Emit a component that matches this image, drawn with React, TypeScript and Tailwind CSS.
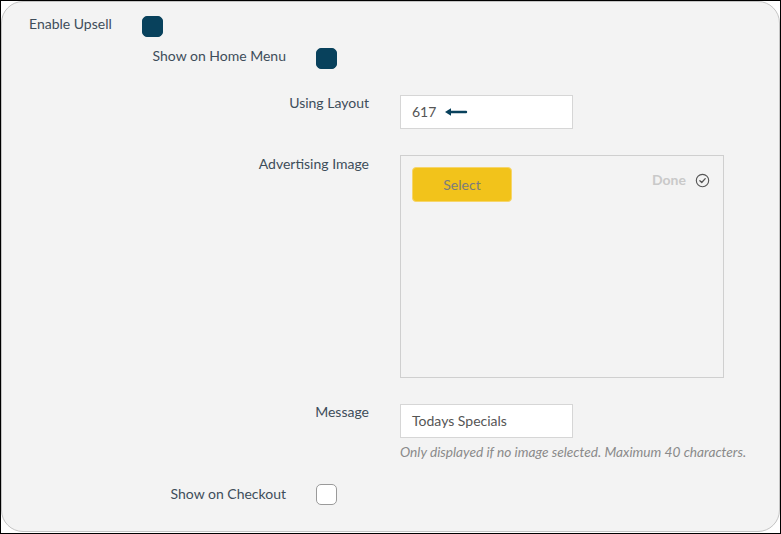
import React from 'react';

const font = { fontFamily: 'Lato, "Noto Sans", sans-serif' };

function Check({ on }: { on: boolean }) {
  return (
    <div
      className={`w-[21px] h-[21px] rounded-[5px] shrink-0 ${
        on ? 'bg-[#08415c] border border-[#08415c]' : 'bg-white border border-[#9a9a9a]'
      }`}
    />
  );
}

function ArrowLeft() {
  return (
    <svg width="24" height="10" viewBox="0 0 24 10" className="ml-[8px]">
      <path d="M22 5H5" stroke="#08415c" strokeWidth="2.4" strokeLinecap="round" />
      <path d="M1 5L7 1.2V8.8Z" fill="#08415c" />
    </svg>
  );
}

function DoneIcon() {
  return (
    <svg width="15" height="15" viewBox="0 0 16 16" className="ml-[9px]">
      <circle cx="8" cy="8" r="6.6" fill="none" stroke="#555" strokeWidth="1.2" />
      <path d="M5.2 8.2L7.2 10.1L10.9 6" fill="none" stroke="#555" strokeWidth="1.4" strokeLinecap="round" strokeLinejoin="round" />
    </svg>
  );
}

export default function App() {
  return (
    <div className="w-[781px] h-[534px] bg-white border border-black overflow-hidden" style={font}>
      <div className="h-[531px] rounded-[22px] border border-[#c4c4c4] bg-[#f3f3f3] text-[14px] leading-[16px] text-[#3e4d5a]">
        {/* Enable Upsell */}
        <div className="flex items-start mt-[14px] ml-[27px]">
          <div className="w-[113px]">Enable Upsell</div>
          <Check on />
        </div>

        {/* Show on Home Menu */}
        <div className="flex items-start mt-[11px]">
          <div className="w-[284px] text-right">Show on Home Menu</div>
          <div className="ml-[30px]">
            <Check on />
          </div>
        </div>

        {/* Using Layout */}
        <div className="flex items-start mt-[26px]">
          <div className="w-[367px] text-right">Using Layout</div>
          <div className="ml-[31px] w-[173px] h-[34px] bg-white border border-[#d6d6d6] flex items-center pl-[11px] text-[#555]">
            617
            <ArrowLeft />
          </div>
        </div>

        {/* Advertising Image */}
        <div className="flex items-start mt-[26px]">
          <div className="w-[367px] text-right pt-[1px]">Advertising Image</div>
          <div className="ml-[31px] w-[324px] h-[223px] border border-[#cfcfcf] flex items-start justify-between pl-[11px] pr-[13px] pt-[11px]">
            <button className="w-[100px] h-[35px] rounded-[4px] bg-[#f2c31b] border border-[#f6d56a] text-[#7c7c7c]">
              Select
            </button>
            <div className="flex items-center mt-[5px] text-[#c9c9c9] font-bold">
              Done
              <DoneIcon />
            </div>
          </div>
        </div>

        {/* Message */}
        <div className="flex items-start mt-[26px]">
          <div className="w-[367px] text-right">Message</div>
          <div className="ml-[31px]">
            <div className="w-[173px] h-[34px] bg-white border border-[#d6d6d6] flex items-center pl-[11px] text-[#555]">
              Todays Specials
            </div>
            <div className="mt-[6px] text-[13.7px] italic text-[#8a8a8a] whitespace-nowrap">
              Only displayed if no image selected. Maximum 40 characters.
            </div>
          </div>
        </div>

        {/* Show on Checkout */}
        <div className="flex items-start mt-[24px]">
          <div className="w-[284px] text-right pt-[2px]">Show on Checkout</div>
          <div className="ml-[30px]">
            <Check on={false} />
          </div>
        </div>
      </div>
    </div>
  );
}
